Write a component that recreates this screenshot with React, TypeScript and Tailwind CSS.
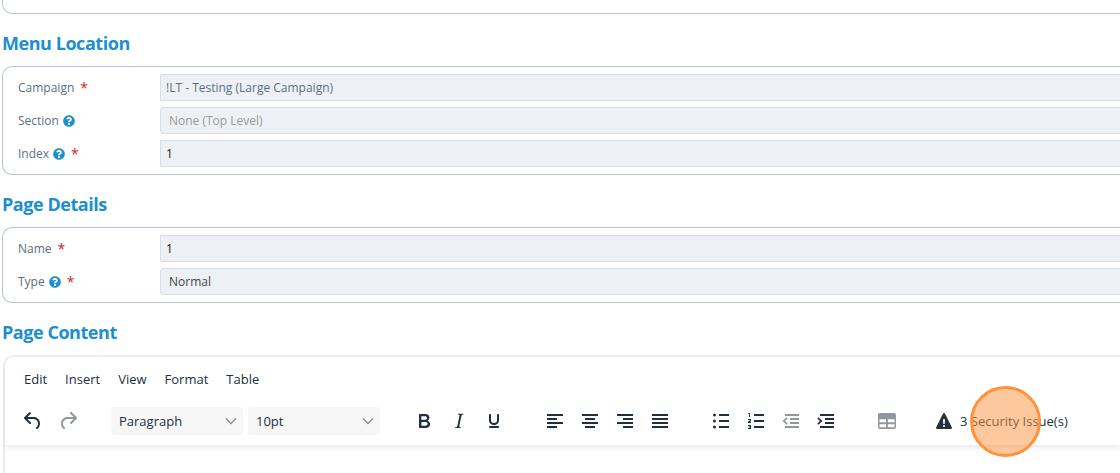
import React from "react";
import { FaQuestionCircle } from "react-icons/fa";

const icons: Record<string, string> = {
  undo: "M6.4 8H12c3.7 0 6.2 2 6.8 5.1.6 2.7-.4 5.6-2.3 6.8a1 1 0 0 1-1-1.8c1.1-.6 1.8-2.7 1.4-4.6-.5-2.1-2.1-3.5-4.9-3.5H6.4l3.3 3.3a1 1 0 1 1-1.4 1.4l-5-5a1 1 0 0 1 0-1.4l5-5a1 1 0 0 1 1.4 1.4L6.4 8Z",
  redo: "M17.6 10H12c-2.8 0-4.4 1.4-4.9 3.5-.4 2 .3 4 1.4 4.6a1 1 0 1 1-1 1.8c-2-1.2-2.9-4.1-2.3-6.8.6-3 3-5.1 6.8-5.1h5.6l-3.3-3.3a1 1 0 1 1 1.4-1.4l5 5a1 1 0 0 1 0 1.4l-5 5a1 1 0 0 1-1.4-1.4l3.3-3.3Z",
  bold: "M7.8 19c-.3 0-.5 0-.6-.2l-.2-.5V5.7c0-.2 0-.4.2-.5l.6-.2h5c1.5 0 2.7.3 3.5 1 .7.6 1.1 1.4 1.1 2.5a3 3 0 0 1-.6 1.9c-.4.6-1 1-1.6 1.2.4.1.9.3 1.3.6s.8.7 1 1.2c.4.4.5 1 .5 1.6 0 1.3-.4 2.3-1.3 3-.8.7-2.1 1-3.8 1H7.8Zm5-8.3c.6 0 1.2-.1 1.6-.5.4-.3.6-.7.6-1.3 0-1.1-.8-1.7-2.3-1.7H9.3v3.5h3.4Zm.5 6c.7 0 1.3-.1 1.7-.4.4-.4.6-.9.6-1.5s-.2-1-.7-1.4c-.4-.3-1-.4-2-.4H9.4v3.8h4Z",
  italic: "m16.7 4.7-.1.9h-.3c-.6 0-1 0-1.4.3-.3.3-.4.6-.5 1.1l-2.1 9.8v.6c0 .5.4.8 1.4.8h.2l-.2.8H8l.2-.8h.2c1.1 0 1.8-.5 2-1.5l2-9.8.1-.5c0-.6-.4-.8-1.4-.8h-.3l.2-.9h5.8Z",
  underline: "M16 5c.6 0 1 .4 1 1v5.5a4 4 0 0 1-.4 1.8l-1 1.4a5.3 5.3 0 0 1-5.5 1 5 5 0 0 1-1.6-1c-.5-.4-.8-.9-1.1-1.4a4 4 0 0 1-.4-1.8V6c0-.6.4-1 1-1s1 .4 1 1v5.5c0 .3 0 .6.2 1l.6.7a3.3 3.3 0 0 0 2.2.8 3.4 3.4 0 0 0 2.2-.8c.3-.2.4-.5.6-.8l.2-.9V6c0-.6.4-1 1-1ZM8 17h8c.6 0 1 .4 1 1s-.4 1-1 1H8a1 1 0 0 1 0-2Z",
  left: "M4 5h16v2H4zM4 9h10v2H4zM4 13h16v2H4zM4 17h10v2H4z",
  center: "M4 5h16v2H4zM7 9h10v2H7zM4 13h16v2H4zM7 17h10v2H7z",
  right: "M4 5h16v2H4zM10 9h10v2H10zM4 13h16v2H4zM10 17h10v2H10z",
  justify: "M4 5h16v2H4zM4 9h16v2H4zM4 13h16v2H4zM4 17h16v2H4z",
  bullets: "M10 5h10v2H10zM10 11h10v2H10zM10 17h10v2H10zM4 6a1.5 1.5 0 1 0 3 0 1.5 1.5 0 1 0-3 0zM4 12a1.5 1.5 0 1 0 3 0 1.5 1.5 0 1 0-3 0zM4 18a1.5 1.5 0 1 0 3 0 1.5 1.5 0 1 0-3 0z",
  numbers: "M10 5h10v2H10zM10 11h10v2H10zM10 17h10v2H10zM4.5 4H6v4H5V5h-.8zM4 10h3v2.4L5.6 13H7v1H4v-1.6L6 11.4V11H4zM4 16h3v4H4v-1h2v-.6H4.6v-.9H6V17H4z",
  outdent: "M6 5h14v2H6zM11 9h9v2h-9zM11 13h9v2h-9zM6 17h14v2H6zM7.6 15.8 4 12.6a.8.8 0 0 1 0-1.200l3.600-3.200 1.100 1.300L6 12l2.700 2.500z",
  indent: "M6 5h14v2H6zM11 9h9v2h-9zM11 13h9v2h-9zM6 17h14v2H6zM4.4 15.8 8 12.6a.8.8 0 0 0 0-1.200L4.400 8.200 3.300 9.500 6 12l-2.700 2.500z",
  table: "M5 4h14a2 2 0 0 1 2 2v12a2 2 0 0 1-2 2H5a2 2 0 0 1-2-2V6c0-1.100.9-2 2-2Zm-.5 6.300v3h6.600v-3Zm8.400 0v3h6.600v-3Zm-8.400 5v3h6.600v-3Zm8.400 0v3h6.600v-3Z",
  warning: "M19.8 18.3c.2.5.3.9 0 1.2-.1.3-.5.5-1 .5H5.2c-.5 0-.9-.2-1-.5-.3-.3-.2-.7 0-1.2L11 4.7l.5-.5.5-.2c.2 0 .3 0 .5.2.2 0 .3.3.5.5l6.8 13.6ZM12 18c.3 0 .5-.1.7-.3.2-.2.3-.4.3-.7a1 1 0 0 0-.3-.7 1 1 0 0 0-.7-.3 1 1 0 0 0-.7.3 1 1 0 0 0-.3.7c0 .3.1.5.3.7.2.2.4.3.7.3Zm.7-3 .3-4a1 1 0 0 0-.3-.7 1 1 0 0 0-.7-.3 1 1 0 0 0-.7.3 1 1 0 0 0-.3.7l.3 4h1.4Z",
};

const menus = ["Edit", "Insert", "View", "Format", "Table"];

const Icon = ({ name }: { name: string }) => (
  <svg width="24" height="24" viewBox="0 0 24 24" className="shrink-0" fill="currentColor" fillRule="evenodd">
    <path d={icons[name]} />
  </svg>
);

const ToolButton = ({ name, disabled }: { name: string; disabled?: boolean }) => (
  <button
    type="button"
    aria-label={name}
    disabled={disabled}
    className="flex h-7 w-[35px] items-center justify-center disabled:text-[#222f3e]/50"
  >
    <Icon name={name} />
  </button>
);

const ToolSelect = ({ label, value }: { label: string; value: string }) => (
  <div className="relative w-[132px]">
    <select aria-label={label} className="h-7 w-full appearance-none rounded-[3px] bg-[#f7f7f7] pt-0.5 pl-2">
      <option>{value}</option>
    </select>
    <svg width="12" height="12" viewBox="0 0 12 12" className="pointer-events-none absolute top-2 right-1.5">
      <path d="M1 3.500 6 8.500l5-5" fill="none" stroke="#8b9097" strokeWidth="1.500" />
    </svg>
  </div>
);

const Heading = ({ children }: { children: React.ReactNode }) => (
  <h2 className="mt-[15px] mb-[9px] text-lg leading-7 font-bold tracking-tight text-[#1b8fd0]">{children}</h2>
);

const Panel = ({ children }: { children: React.ReactNode }) => (
  <div className="flex flex-col gap-1.5 rounded-l-[10px] border border-r-0 border-[#b7c3ce] py-[7px] pl-[15px]">
    {children}
  </div>
);

type FieldProps = {
  id: string;
  label: string;
  value: string;
  help?: boolean;
  required?: boolean;
  select?: boolean;
  color: string;
};

const Field = ({ id, label, value, help, required, select, color }: FieldProps) => (
  <div className="flex items-center">
    <div className="flex w-[142px] shrink-0 items-center">
      <label htmlFor={id} className="text-[#5b6f80]">{label}</label>
      {help && <FaQuestionCircle className="ml-1 text-[#1b8fd0]" size={12} />}
      {required && <span className="ml-1.5 text-sm leading-5 text-[#e02020]">*</span>}
    </div>
    {select ? (
      <select
        id={id}
        disabled
        className={`h-[27px] min-w-0 flex-1 appearance-none rounded-l-[4px] border border-r-0 border-[#d8e0e7] bg-[#edf1f5] pl-2 opacity-100 ${color}`}
      >
        <option>{value}</option>
      </select>
    ) : (
      <input
        id={id}
        readOnly
        value={value}
        className={`h-[27px] min-w-0 flex-1 rounded-l-[2px] border border-r-0 border-[#d8e0e7] bg-[#edf1f5] pl-[5px] ${color}`}
      />
    )}
  </div>
);

export default function App() {
  return (
    <main className="min-h-screen overflow-hidden bg-white pl-0.5 font-['Open_Sans',sans-serif] text-xs">
      <div className="h-3.5 rounded-bl-[10px] border-b border-l border-[#b7c3ce]" />

      <Heading>Menu Location</Heading>
      <Panel>
        <Field id="campaign" label="Campaign" value="!LT - Testing (Large Campaign)" required color="text-[#5b6f80]" />
        <Field id="section" label="Section" value="None (Top Level)" help select color="text-[#999999]" />
        <Field id="index" label="Index" value="1" help required color="text-[#111111]" />
      </Panel>

      <Heading>Page Details</Heading>
      <Panel>
        <Field id="name" label="Name" value="1" required color="text-[#111111]" />
        <Field id="type" label="Type" value="Normal" help required select color="text-[#444444]" />
      </Panel>

      <Heading>Page Content</Heading>
      <section className="ml-px rounded-tl-[10px] border-t-2 border-l-2 border-[#eeeeee] text-[13px] text-[#222f3e]">
        <div className="rounded-tl-[10px] pt-[9px] pb-[9px] shadow-[0_3px_5px_rgba(34,47,62,0.09)]">
          <nav className="flex h-7 items-center gap-[18px] pl-[19px]">
            {menus.map((menu) => (
              <button key={menu} type="button">{menu}</button>
            ))}
          </nav>
          <div className="mt-3 flex h-[30px] items-center gap-[26px] pl-[10px]">
            <div className="flex">
              <ToolButton name="undo" />
              <ToolButton name="redo" disabled />
            </div>
            <div className="flex gap-[5px]">
              <ToolSelect label="Block format" value="Paragraph" />
              <ToolSelect label="Font size" value="10pt" />
            </div>
            <div className="flex">
              <ToolButton name="bold" />
              <ToolButton name="italic" />
              <ToolButton name="underline" />
            </div>
            <div className="flex">
              <ToolButton name="left" />
              <ToolButton name="center" />
              <ToolButton name="right" />
              <ToolButton name="justify" />
            </div>
            <div className="flex">
              <ToolButton name="bullets" />
              <ToolButton name="numbers" />
              <ToolButton name="outdent" disabled />
              <ToolButton name="indent" />
            </div>
            <ToolButton name="table" disabled />
            <button type="button" className="relative flex h-7 items-center gap-1 pl-0.5 whitespace-nowrap">
              <Icon name="warning" />
              <span className="pt-0.5">3 Security Issue(s)</span>
              <span className="absolute -top-[21px] left-10 size-[71px] rounded-full border-[3px] border-[#ff923b] bg-[#fb923c]/50" />
            </button>
          </div>
        </div>
        <div className="h-7" />
      </section>
    </main>
  );
}
